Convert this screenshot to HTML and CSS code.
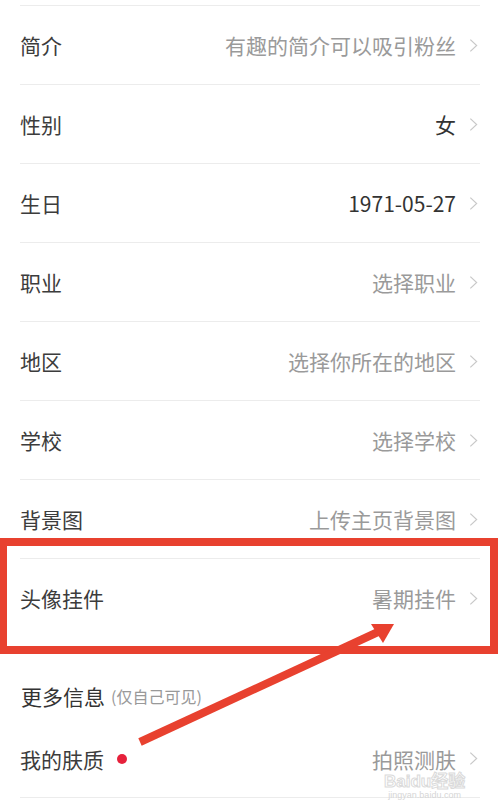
FILE: index.html
```html
<!DOCTYPE html>
<html lang="zh-CN">
<head>
    <meta charset="UTF-8">
    <meta name="viewport" content="width=device-width, initial-scale=1.0">
    <title>编辑资料</title>
    <link rel="stylesheet" href="styles.css">
</head>
<body>
    <div class="page">
        <ul class="list">
            <li class="row">
                <span class="label">简介</span>
                <span class="value muted">有趣的简介可以吸引粉丝</span>
                <svg class="chev" viewBox="0 0 10 16"><path d="M1.5 1.5 L8.5 8 L1.5 14.5"/></svg>
            </li>
            <li class="row">
                <span class="label">性别</span>
                <span class="value">女</span>
                <svg class="chev" viewBox="0 0 10 16"><path d="M1.5 1.5 L8.5 8 L1.5 14.5"/></svg>
            </li>
            <li class="row">
                <span class="label">生日</span>
                <span class="value">1971-05-27</span>
                <svg class="chev" viewBox="0 0 10 16"><path d="M1.5 1.5 L8.5 8 L1.5 14.5"/></svg>
            </li>
            <li class="row">
                <span class="label">职业</span>
                <span class="value muted">选择职业</span>
                <svg class="chev" viewBox="0 0 10 16"><path d="M1.5 1.5 L8.5 8 L1.5 14.5"/></svg>
            </li>
            <li class="row">
                <span class="label">地区</span>
                <span class="value muted">选择你所在的地区</span>
                <svg class="chev" viewBox="0 0 10 16"><path d="M1.5 1.5 L8.5 8 L1.5 14.5"/></svg>
            </li>
            <li class="row">
                <span class="label">学校</span>
                <span class="value muted">选择学校</span>
                <svg class="chev" viewBox="0 0 10 16"><path d="M1.5 1.5 L8.5 8 L1.5 14.5"/></svg>
            </li>
            <li class="row">
                <span class="label">背景图</span>
                <span class="value muted">上传主页背景图</span>
                <svg class="chev" viewBox="0 0 10 16"><path d="M1.5 1.5 L8.5 8 L1.5 14.5"/></svg>
            </li>
            <li class="row">
                <span class="label">头像挂件</span>
                <span class="value muted">暑期挂件</span>
                <svg class="chev" viewBox="0 0 10 16"><path d="M1.5 1.5 L8.5 8 L1.5 14.5"/></svg>
            </li>
        </ul>

        <div class="section-title">更多信息 <small>(仅自己可见)</small></div>

        <ul class="list">
            <li class="row row-last">
                <span class="label">我的肤质 <i class="dot"></i></span>
                <span class="value muted">拍照测肤</span>
                <svg class="chev" viewBox="0 0 10 16"><path d="M1.5 1.5 L8.5 8 L1.5 14.5"/></svg>
            </li>
        </ul>

        <!-- annotation overlay -->
        <div class="highlight"></div>
        <svg class="arrow" viewBox="0 0 500 803">
            <line x1="140" y1="742" x2="378" y2="632"/>
            <polygon points="394,624 371,624 383,643"/>
        </svg>
        <div class="watermark">
            <span class="wm-big">Baidu经验</span>
            <span class="wm-small">jingyan.baidu.com</span>
        </div>
    </div>
</body>
</html>
```

FILE: styles.css
```css
body {
    margin: 0;
    padding: 0;
    background: #fff;
    font-family: "Noto Sans CJK SC", "Noto Sans", sans-serif;
    color: #333;
}

.page {
    position: relative;
    width: 500px;
    height: 803px;
    overflow: hidden;
    padding-top: 5px;
    box-sizing: border-box;
}

.list {
    list-style: none;
    margin: 0 20px;
    padding: 0;
}

.row {
    display: flex;
    align-items: center;
    height: 79px;
    box-sizing: border-box;
    border-top: 1px solid #ececec;
    font-size: 21px;
}

.row-last {
    border-top: none;
    border-bottom: 1px solid #ececec;
    height: 78px;
}

.label {
    flex: 1;
    display: flex;
    align-items: center;
    color: #3c3c3c;
}

.value {
    color: #333;
}

.value.muted {
    color: #9a9a9a;
}

.chev {
    width: 9px;
    height: 15px;
    margin-left: 13px;
    margin-right: 2px;
    fill: none;
    stroke: #c8c8c8;
    stroke-width: 1.3;
}

.section-title {
    height: 83px;
    box-sizing: border-box;
    padding: 0 21px 12px;
    display: flex;
    align-items: flex-end;
    font-size: 21px;
    color: #333;
    line-height: 24px;
}

.section-title small {
    font-size: 16px;
    color: #999;
    margin-left: 6px;
}

.dot {
    display: inline-block;
    width: 10px;
    height: 10px;
    border-radius: 50%;
    background: #e6213b;
    margin-left: 13px;
}

.highlight {
    position: absolute;
    left: 0;
    top: 538px;
    width: 498px;
    height: 116px;
    box-sizing: border-box;
    border: 8px solid #e8412f;
    border-left-width: 7px;
}

.arrow {
    position: absolute;
    left: 0;
    top: 0;
    width: 500px;
    height: 803px;
}

.arrow line {
    stroke: #e8412f;
    stroke-width: 8;
}

.arrow polygon {
    fill: #e8412f;
}

.watermark {
    position: absolute;
    left: 384px;
    top: 773px;
    display: flex;
    flex-direction: column;
    align-items: center;
    color: rgba(255, 255, 255, 0.6);
    font-family: "Liberation Sans", "Noto Sans CJK SC", sans-serif;
}

.wm-big {
    font-size: 17px;
    font-weight: bold;
    line-height: 17px;
    -webkit-text-stroke: 1px #dadada;
}

.wm-small {
    font-size: 9px;
    line-height: 11px;
    color: #d6d6d6;
}
```
